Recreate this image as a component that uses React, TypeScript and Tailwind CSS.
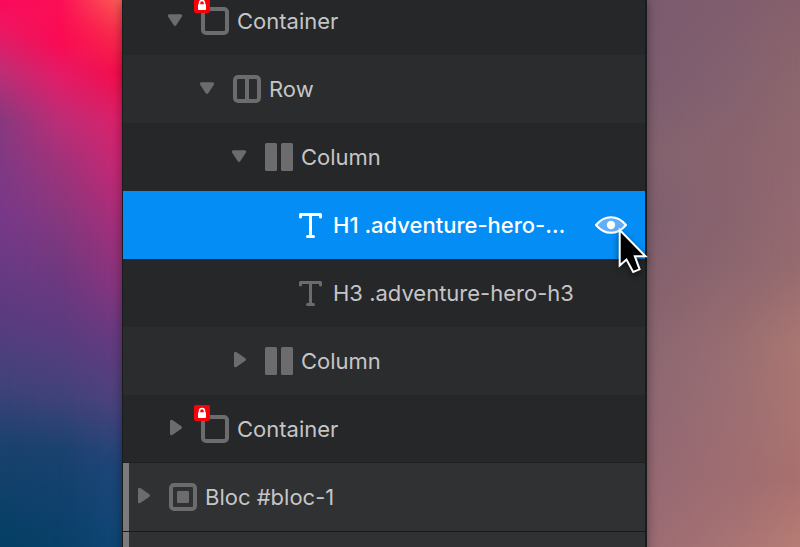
import React from "react";

type IconKind = "container" | "row" | "column" | "text" | "bloc";

interface TreeItem {
  label: string;
  icon: IconKind;
  indent: string;
  background: string;
  state?: "open" | "closed";
  locked?: boolean;
  selected?: boolean;
}

const items: TreeItem[] = [
  { label: "Container", icon: "container", indent: "pl-[44px]", background: "bg-[#262729]", state: "open", locked: true },
  { label: "Row", icon: "row", indent: "pl-[76px]", background: "bg-[#2b2c2e]", state: "open" },
  { label: "Column", icon: "column", indent: "pl-[108px]", background: "bg-[#262729]", state: "open" },
  { label: "H1 .adventure-hero-…", icon: "text", indent: "pl-[140px]", background: "bg-[#038df5]", selected: true },
  { label: "H3 .adventure-hero-h3", icon: "text", indent: "pl-[140px]", background: "bg-[#262729]" },
  { label: "Column", icon: "column", indent: "pl-[108px]", background: "bg-[#2b2c2e]", state: "closed" },
  { label: "Container", icon: "container", indent: "pl-[44px]", background: "bg-[#262729]", state: "closed", locked: true },
];

function Disclosure({ state, label }: { state?: "open" | "closed"; label: string }) {
  if (!state) return <span className="w-4 shrink-0" />;
  return (
    <button type="button" aria-label={`Toggle ${label}`} className="shrink-0 text-[#6c6c6e]">
      <svg width="16" height="20" viewBox="0 0 16 20" fill="currentColor" stroke="currentColor" strokeWidth="3" strokeLinejoin="round" className="block">
        {state === "open" ? <path d="M2.3 4.7h11.4L8 13.3z" /> : <path d="M4.500 2.300v12.400L13.500 8.500z" />}
      </svg>
    </button>
  );
}

function NodeIcon({ kind }: { kind: IconKind }) {
  return (
    <svg width="28" height="28" viewBox="0 0 28 28" fill="none" stroke="currentColor" className="block" aria-hidden="true">
      {kind === "container" && <rect x="2" y="2" width="24" height="24" rx="3" strokeWidth="4" />}
      {kind === "row" && (
        <>
          <rect x="2" y="2" width="24" height="24" rx="3" strokeWidth="4" />
          <path d="M14 3v22" strokeWidth="4" />
        </>
      )}
      {kind === "column" && (
        <g fill="currentColor" stroke="none">
          <rect width="12" height="28" rx="1.5" />
          <rect x="16" width="12" height="28" rx="1.5" />
        </g>
      )}
      {kind === "bloc" && (
        <>
          <rect x="2" y="2" width="24" height="24" rx="3" strokeWidth="4" />
          <rect x="8" y="8" width="12" height="12" rx="1" fill="currentColor" stroke="none" />
        </>
      )}
      {kind === "text" && (
        <path d="M3.500 6V3.500h20V6M13.500 3.500v22M10.500 25.500h6" strokeWidth="3" strokeLinecap="round" strokeLinejoin="round" />
      )}
    </svg>
  );
}

function LockBadge() {
  return (
    <span className="absolute -left-[7px] -top-[10px] flex size-4 items-center justify-center rounded-[2px] bg-[#fb0007]">
      <svg width="10" height="12" viewBox="0 0 10 12" aria-label="Locked">
        <path d="M2.500 6V4a2.500 2.500 0 0 1 5 0v2" fill="none" stroke="#fff" strokeWidth="1.500" />
        <rect x="1" y="5.300" width="8" height="5.700" rx=".7" fill="#fff" />
      </svg>
    </span>
  );
}

function Visibility() {
  return (
    <span className="relative ml-auto mr-[18px] shrink-0">
      <button type="button" aria-label="Hide element" className="block">
        <svg width="32" height="18" viewBox="0 0 32 18" className="block">
          <path d="M1 9Q7.5 1.2 16 1.2T31 9Q24.5 16.8 16 16.8T1 9Z" fill="#61aff8" stroke="#fff" strokeWidth="2" strokeLinejoin="round" />
          <circle cx="16" cy="9" r="4.2" fill="#fff" />
        </svg>
      </button>
      <svg width="36" height="52" viewBox="0 0 36 52" className="pointer-events-none absolute left-[20px] top-[8px] z-20 drop-shadow-[0_3px_3px_rgba(0,0,0,0.5)]" aria-hidden="true">
        <path d="M4.700 6V41.500L11.500 35.500L18.200 48L24.600 45.300L19.800 32.200H30.500Z" fill="#000" stroke="#fff" strokeWidth="2" />
      </svg>
    </span>
  );
}

function TreeRow({ item }: { item: TreeItem }) {
  return (
    <li className={`flex h-[68px] items-center ${item.indent} ${item.background} ${item.selected ? "font-medium text-white" : "text-[#c5c5c7]"}`}>
      <Disclosure state={item.state} label={item.label} />
      <span className={`relative ml-[18px] mr-2 shrink-0 ${item.selected ? "text-white" : "text-[#6c6c6e]"}`}>
        <NodeIcon kind={item.icon} />
        {item.locked && <LockBadge />}
      </span>
      <span className="whitespace-nowrap">{item.label}</span>
      {item.selected && <Visibility />}
    </li>
  );
}

export default function App() {
  return (
    <main className="grid h-screen grid-cols-[122fr_525fr_153fr] overflow-hidden font-['Inter',sans-serif] text-[22px] leading-7">
      <div className="grid bg-[linear-gradient(to_bottom,#fb0a5d_0%,#ed1762_5%,#bd2e75_12%,#87397f_20%,#76398a_37%,#5a3c80_53%,#40427a_64%,#1b426f_74%,#083f67_87%,#003f65_100%)]">
        <div className="grid bg-[linear-gradient(to_bottom,#fc0f55_0%,#fa0b53_7%,#e21c68_13%,#bd2d76_20%,#a0337a_27%,#84387e_37%,#6e387f_46%,#5a3c7f_56%,#41427a_66%,#1a426f_75%,#11416d_83%,#034066_95%,#034066_100%)] [mask-image:linear-gradient(to_right,transparent,black_50%)]">
          <div className="bg-[linear-gradient(to_bottom,#fb5f55_0%,#f8324b_5%,#f50c49_12%,#dc2069_20%,#c82774_28%,#a82d7a_37%,#8e337d_46%,#683a80_56%,#4c427d_67%,#1e457a_78%,#124778_88%,#0b406d_100%)] [mask-image:linear-gradient(to_right,transparent_50%,black)]" />
        </div>
      </div>
      <section aria-label="Layer tree" className="z-10 border-l border-r-2 border-[#191b1d] bg-[#303133] shadow-[0_0_10px_rgba(0,0,0,0.4)]">
        <ul className="-mt-[13px]">
          {items.map((item, index) => (
            <TreeRow key={index} item={item} />
          ))}
          <li className="flex h-[69px] items-center border-b border-[#19191b] bg-[#303133] text-[#c5c5c7] shadow-[0_-1px_0_#1e1f21]">
            <span className="mr-[6px] w-[6px] self-stretch bg-[#7b7b7b]" />
            <Disclosure state="closed" label="Bloc #bloc-1" />
            <span className="ml-[18px] mr-2 text-[#6c6c6e]">
              <NodeIcon kind="bloc" />
            </span>
            <span>Bloc #bloc-1</span>
          </li>
          <li className="flex h-[68px]" aria-hidden="true">
            <span className="w-[6px] bg-[#7b7b7b]" />
          </li>
        </ul>
      </section>
      <div className="grid bg-[linear-gradient(to_bottom,#7c5b70_0%,#7d5d70_15%,#83626e_25%,#80606f_36%,#87636e_50%,#8d6873_62%,#946973_76%,#9a6b73_88%,#a07075_100%)]">
        <div className="bg-[linear-gradient(to_bottom,#85606b_0%,#8d676d_15%,#92676f_30%,#966b6f_44%,#a97671_57%,#aa7471_70%,#a9706e_80%,#b97e75_93%,#b67c73_100%)] [mask-image:linear-gradient(to_right,transparent,rgba(0,0,0,0.5)_60%,black)]" />
      </div>
    </main>
  );
}
